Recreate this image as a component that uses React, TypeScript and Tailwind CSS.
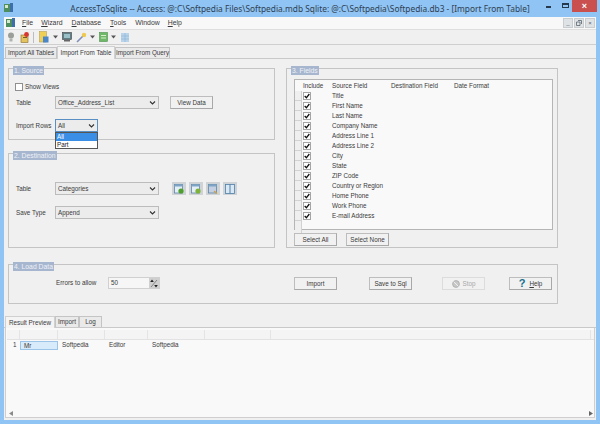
import React from "react";

const font = "font-['Liberation_Sans',sans-serif] text-[#3a3a3a] text-[6.3px] leading-[10px]";

function Btn({ children, className = "" }: { children: React.ReactNode; className?: string }) {
  return (
    <div className={`h-[13px] w-[43px] shrink-0 flex items-center justify-center gap-[3px] bg-[#f1f1f1] border border-[#bdbdbd] border-b-[#a8a8a8] border-r-[#a8a8a8] ${className}`}>
      {children}
    </div>
  );
}

function Select({ value, w = "w-[104px]" }: { value: string; w?: string }) {
  return (
    <div className={`h-[13px] ${w} shrink-0 flex items-center justify-between pl-[2px] pr-[2px] bg-[#ececec] border border-[#bcbcbc]`}>
      <span>{value}</span>
      <svg width="7" height="6" viewBox="0 0 7 6"><path d="M1 1.5 L3.5 4 L6 1.5" fill="none" stroke="#333" strokeWidth="1.1" /></svg>
    </div>
  );
}

function Group({ title, className = "", children }: { title: string; className?: string; children?: React.ReactNode }) {
  return (
    <div className={`relative border border-[#c4c4c4] ${className}`}>
      <span className="absolute left-[4px] top-[-3px] h-[9px] px-[1px] bg-[#a7b6cf] text-[#eef1f6] text-[6.8px] leading-[9px] whitespace-nowrap">{title}</span>
      {children}
    </div>
  );
}

function Arrow() {
  return <svg width="5" height="4" viewBox="0 0 5 4" className="shrink-0"><path d="M0 0.5H5L2.5 3.5Z" fill="#555" /></svg>;
}

function Toolbar() {
  return (
    <div className="h-[15px] flex items-center pl-[3px] bg-[#f0f0f0] border-b border-[#cfcfcf]">
      <svg width="8" height="10" viewBox="0 0 8 10" className="ml-[0px]"><circle cx="4" cy="3.5" r="3" fill="#9a9f9a" /><rect x="2.5" y="6.5" width="3" height="3" fill="#aeb3ae" /></svg>
      <svg width="10" height="11" viewBox="0 0 10 11" className="ml-[5px]"><rect x="1" y="3" width="7" height="7.5" fill="#e2c35e" stroke="#8a6a2a" strokeWidth=".6" /><rect x="3" y="5" width="4" height="1" fill="#7a5a2a" /><circle cx="6.5" cy="2.5" r="2.4" fill="#d8362e" /></svg>
      <div className="w-[1px] h-[11px] bg-[#bdbdbd] ml-[3px]" />
      <svg width="10" height="12" viewBox="0 0 10 12" className="ml-[5px]"><rect x="0.5" y="0.5" width="7" height="10.5" fill="#efcf55" stroke="#b8a050" strokeWidth=".6" /><rect x="4" y="5.5" width="5.5" height="6" fill="#4a86c8" /></svg>
      <div className="ml-[4px]"><Arrow /></div>
      <svg width="10" height="10" viewBox="0 0 10 10" className="ml-[4px]"><rect x="0.5" y="0.5" width="9" height="7" fill="#5f7f86" stroke="#444" strokeWidth=".6" /><rect x="2" y="2" width="6" height="4" fill="#9cc0c8" /><rect x="2" y="8" width="6" height="1.5" fill="#666" /></svg>
      <svg width="11" height="11" viewBox="0 0 11 11" className="ml-[4px]"><path d="M1 10 L7 4" stroke="#7f8fb8" strokeWidth="1.6" /><circle cx="8" cy="3" r="2.2" fill="#eec94e" /></svg>
      <div className="ml-[3px]"><Arrow /></div>
      <svg width="9" height="10" viewBox="0 0 9 10" className="ml-[4px]"><rect x="0.5" y="0.5" width="8" height="9" fill="#6fb86a" stroke="#4c8f4c" strokeWidth=".6" /><rect x="2" y="3" width="5" height="1" fill="#d8edc8" /><rect x="2" y="5.5" width="5" height="1" fill="#d8edc8" /></svg>
      <div className="ml-[3px]"><Arrow /></div>
      <svg width="8" height="9" viewBox="0 0 8 9" className="ml-[5px]"><rect width="8" height="9" fill="#b9d4ea" /><path d="M0 3H8M0 6H8M4 0V9" stroke="#8fb4d6" strokeWidth=".7" /></svg>
    </div>
  );
}

function DestIcon({ kind }: { kind: number }) {
  return (
    <div className="w-[14px] h-[13px] bg-[#cfd3d6] flex items-center justify-center relative shrink-0">
      <svg width="10" height="10" viewBox="0 0 10 10">
        {kind === 3 ? (
          <>
            <rect x="0.5" y="0.5" width="9" height="9" fill="#d8e8f4" stroke="#4f7ea8" strokeWidth=".8" />
            <path d="M5 0.5V9.5" stroke="#4f7ea8" strokeWidth="1" />
          </>
        ) : (
          <>
            <rect x="0.5" y="0.5" width="8" height="8.5" fill={kind === 2 ? "#c4cfe2" : "#e4eef6"} stroke="#5f86a8" strokeWidth=".8" />
            <rect x="0.5" y="0.5" width="8" height="2" fill="#7fa5c6" />
            {kind === 2 ? <path d="M6 7L9 9.5" stroke="#c9a24a" strokeWidth="1.2" /> : <circle cx="7" cy="7" r="2.6" fill={kind === 1 ? "#7fb23c" : "#4f9f2f"} />}
          </>
        )}
      </svg>
    </div>
  );
}

const fields = ["Title", "First Name", "Last Name", "Company Name", "Address Line 1", "Address Line 2", "City", "State", "ZIP Code", "Country or Region", "Home Phone", "Work Phone", "E-mail Address"];

function FieldRow({ name }: { name: string }) {
  return (
    <div className="h-[10px] flex items-center">
      <div className="w-[7px] h-[10px] bg-[#efefef] border-b border-r border-[#d2d2d2] shrink-0" />
      <div className="ml-[1px] w-[8px] h-[8px] bg-white border border-[#a5a5a5] flex items-center justify-center shrink-0">
        <svg width="6" height="6" viewBox="0 0 6 6"><path d="M0.7 3 L2.4 4.8 L5.3 1" fill="none" stroke="#111" strokeWidth="1.3" /></svg>
      </div>
      <span className="ml-[21px]">{name}</span>
    </div>
  );
}

export default function App() {
  return (
    <div className={`w-[600px] h-[424px] bg-[#8fc4f4] flex flex-col overflow-hidden ${font}`}>
      {/* Title bar */}
      <div className="h-[17px] shrink-0 relative flex items-center justify-center">
        <svg width="10" height="10" viewBox="0 0 10 10" className="absolute left-[4px] top-[3px]"><rect x="0" y="1" width="8" height="8" fill="#4f8f5f" /><rect x="1" y="2" width="3" height="3" fill="#d8e8d0" /><rect x="6" y="0" width="3" height="9" fill="#3f6fa8" /></svg>
        <span className="text-[#2f3f52] text-[8.35px] leading-[16px] font-['Noto_Sans',sans-serif]">AccessToSqlite -- Access: @:C\Softpedia Files\Softpedia.mdb Sqlite: @:C\Softpedia\Softpedia.db3 - [Import From Table]</span>
        <div className="absolute right-[3px] top-0 h-[12px] flex items-start">
          <div className="w-[5px] h-[2px] bg-[#26384c] mt-[6px] mr-[11px]" />
          <div className="w-[7px] h-[5px] border border-[#26384c] border-t-2 mt-[3px] mr-[3px]" />
          <div className="w-[25px] h-[12px] bg-[#c9504f] text-white flex items-center justify-center text-[9px] font-bold">×</div>
        </div>
      </div>
      {/* Window client */}
      <div className="flex-1 mx-[4px] mb-[4px] bg-[#f0f0f0] flex flex-col min-h-0">
        {/* Menu */}
        <div className="h-[13px] shrink-0 flex items-center bg-[#f8f8f8] border-b border-[#dedede] pl-[2px] relative text-[6.9px]">
          <svg width="10" height="10" viewBox="0 0 10 10"><rect x="0" y="1" width="8" height="8" fill="#4f8f5f" /><rect x="1" y="2" width="3" height="3" fill="#d8e8d0" /><rect x="6" y="0" width="3" height="9" fill="#3f6fa8" /></svg>
          <span className="ml-[6px]"><u>F</u>ile</span>
          <span className="ml-[8px]"><u>W</u>izard</span>
          <span className="ml-[9px]"><u>D</u>atabase</span>
          <span className="ml-[9px]"><u>T</u>ools</span>
          <span className="ml-[9px]">Window</span>
          <span className="ml-[8px]"><u>H</u>elp</span>
          <div className="absolute right-[1px] top-[1px] flex gap-[1px]">
            {["_", "🗗", "×"].map((s) => (
              <div key={s} className="w-[10px] h-[10px] bg-[#dfe3e6] border border-[#c9cdd0] text-[#59656f] flex items-center justify-center text-[6px] leading-none">{s === "🗗" ? <svg width="6" height="6" viewBox="0 0 6 6"><path d="M2 .5H5.5V4M.5 2H4V5.5H.5Z" fill="none" stroke="#59656f" strokeWidth=".8" /></svg> : s}</div>
            ))}
          </div>
        </div>
        <Toolbar />
        {/* Top tabs */}
        <div className="h-[14px] shrink-0 flex items-end pl-[1px] border-b border-[#c9c9c9]">
          <div className="h-[11px] w-[52px] flex items-center justify-center bg-[#eaeaea] border border-b-0 border-[#c4c4c4] whitespace-nowrap">Import All Tables</div>
          <div className="h-[13px] w-[58px] flex items-center justify-center bg-[#f4f4f4] border-t border-x border-[#d0d0d0] -mb-px whitespace-nowrap">Import From Table</div>
          <div className="h-[11px] w-[55px] flex items-center justify-center bg-[#eaeaea] border border-b-0 border-[#c4c4c4] whitespace-nowrap">Import From Query</div>
        </div>
        {/* Main */}
        <div className="pl-[4px] pt-[9px] w-[554px] shrink-0">
          <div className="flex gap-[11px]">
            <div className="flex flex-col gap-[13px] w-[267px] shrink-0">
              <Group title="1. Source" className="h-[72px]">
                <div className="flex items-center pl-[6px] pt-[13px]">
                  <div className="w-[8px] h-[8px] bg-white border border-[#8f8f8f]" />
                  <span className="ml-[2px]">Show Views</span>
                </div>
                <div className="flex items-center pl-[7px] mt-[4px]">
                  <span className="w-[39px]">Table</span>
                  <Select value="Office_Address_List" />
                  <Btn className="ml-[11px]">View Data</Btn>
                </div>
                <div className="flex items-center pl-[7px] mt-[10px] relative">
                  <span className="w-[39px] whitespace-nowrap">Import Rows</span>
                  <Select value="All" w="w-[43px] !border-[#5a8fc4]" />
                  <div className="absolute left-[46px] top-[13px] w-[43px] h-[17px] bg-white border border-[#555] z-10">
                    <div className="h-[8px] bg-[#3a8ee6] text-white leading-[8px] pl-[1px]">All</div>
                    <div className="h-[8px] text-[#222] leading-[8px] pl-[1px]">Part</div>
                  </div>
                </div>
              </Group>
              <Group title="2. Destination" className="h-[95px]">
                <div className="flex items-center pl-[7px] pt-[28px]">
                  <span className="w-[39px]">Table</span>
                  <Select value="Categories" />
                  <div className="flex gap-[3px] ml-[13px]">
                    {[0, 1, 2, 3].map((k) => <DestIcon key={k} kind={k} />)}
                  </div>
                </div>
                <div className="flex items-center pl-[7px] mt-[11px]">
                  <span className="w-[39px]">Save Type</span>
                  <Select value="Append" />
                </div>
              </Group>
            </div>
            <Group title="3. Fields" className="flex-1">
              <div className="ml-[7px] mt-[10px] w-[259px] h-[151px] bg-[#f9f9f9] border border-[#b5b5b5]">
                <div className="h-[10px] mt-[1px] flex items-center">
                  <span className="ml-[8px] w-[29px]">Include</span>
                  <span className="w-[59px]">Source Field</span>
                  <span className="w-[63px]">Destination Field</span>
                  <span>Date Format</span>
                </div>
                {fields.map((f) => <FieldRow key={f} name={f} />)}
                <div className="w-[7px] h-[19px] bg-[#efefef] border-r border-[#d2d2d2]" />
              </div>
              <div className="flex gap-[9px] ml-[7px] mt-[3px]">
                <Btn>Select All</Btn>
                <Btn>Select None</Btn>
              </div>
            </Group>
          </div>
          <Group title="4. Load Data" className="mt-[16px] h-[40px] flex items-start">
            <span className="ml-[47px] mt-[13px] w-[52px] whitespace-nowrap">Errors to allow</span>
            <div className="mt-[12px] w-[52px] h-[12px] flex items-center justify-between bg-[#f6f6f6] border border-[#d0d0d0] pl-[2px]">
              <span>50</span>
              <div className="w-[10px] h-[11px] bg-[#cfcfcf] flex items-center justify-center">
                <svg width="8" height="9" viewBox="0 0 8 9"><path d="M2 .5L3.8 3H.2ZM6 8.5L7.8 6H4.2Z" fill="#222" /><path d="M7 1L1 8" stroke="#555" strokeWidth=".6" /></svg>
              </div>
            </div>
            <div className="ml-[134px] mt-[12px] flex">
              <Btn>Import</Btn>
              <Btn className="ml-[32px]">Save to Sql</Btn>
              <Btn className="ml-[30px] !border-[#dcdcdc] text-[#a8a8a8]">
                <svg width="8" height="8" viewBox="0 0 8 8"><circle cx="4" cy="4" r="3.4" fill="#c8c8c8" stroke="#a8a8a8" strokeWidth=".8" /><path d="M1.5 1.5L6.5 6.5" stroke="#eee" /></svg>
                Stop
              </Btn>
              <Btn className="ml-[24px] gap-[4px]">
                <span className="text-[#15708f] text-[11px] font-bold leading-[11px]">?</span>
                <span><u>H</u>elp</span>
              </Btn>
            </div>
          </Group>
        </div>
        {/* Result tabs */}
        <div className="h-[14px] mt-[10px] shrink-0 flex items-end pl-[1px] border-b border-[#c9c9c9]">
          <div className="h-[12px] w-[50px] flex items-center justify-center bg-[#f4f4f4] border-t border-x border-[#d0d0d0] -mb-px whitespace-nowrap">Result Preview</div>
          <div className="h-[11px] w-[24px] flex items-center justify-center bg-[#eaeaea] border border-b-0 border-[#c4c4c4]">Import</div>
          <div className="h-[11px] w-[23px] flex items-center justify-center bg-[#eaeaea] border border-b-0 border-[#c4c4c4]">Log</div>
        </div>
        {/* Result grid */}
        <div className="flex-1 mx-[1px] mb-[2px] bg-[#f9f9f9] border border-t-0 border-[#cfcfcf] min-h-0 relative">
          <div className="ml-[1px] mt-[2px] h-[10px] flex border-b border-[#e2e2e2] bg-[#f4f4f4]">
            {[13, 38, 47, 43, 57, 66, 320].map((w, i) => (
              <div key={i} style={{ width: w }} className="h-full border-r border-[#e4e4e4] shrink-0" />
            ))}
          </div>
          <div className="ml-[1px] h-[10px] flex items-center">
            <span className="w-[13px] pl-[6px] shrink-0">1</span>
            <span className="w-[38px] h-[9px] pl-[3px] bg-[#d8ebfb] border border-[#9cc4e8] leading-[7px] shrink-0">Mr</span>
            <span className="w-[47px] pl-[4px] shrink-0">Softpedia</span>
            <span className="w-[43px] pl-[4px] shrink-0">Editor</span>
            <span className="pl-[4px]">Softpedia</span>
          </div>
          <svg width="6" height="5" viewBox="0 0 6 5" className="absolute left-[3px] bottom-[1px]"><path d="M0 2.5L4 0V5Z" fill="#8a8a8a" /></svg>
          <svg width="4" height="5" viewBox="0 0 4 5" className="absolute right-[1px] bottom-[1px]"><path d="M4 2.5L0 0V5Z" fill="#666" /></svg>
        </div>
      </div>
    </div>
  );
}
